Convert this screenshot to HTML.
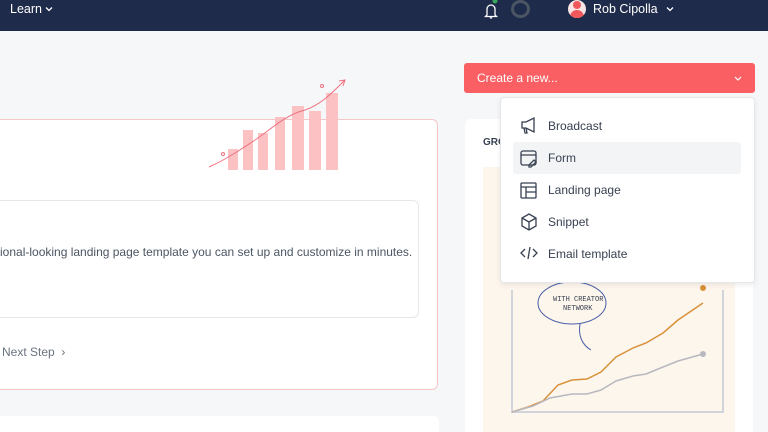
<!DOCTYPE html>
<html style="width:768px;height:432px;overflow:hidden"><head><style>
*{margin:0;padding:0;box-sizing:border-box}
body{width:768px;height:432px;overflow:hidden;background:#f6f7f9;font-family:"Liberation Sans",sans-serif;position:relative}
.a{position:absolute}
.hdr{left:0;top:0;width:768px;height:31px;background:#1f2b4b}
.t{font-size:12px;color:#374151;white-space:nowrap}
</style></head><body>
<div class="a hdr"></div>
<div class="a t" style="left:10px;top:2px;color:#fff;font-size:12.5px">Learn</div>
<svg class="a" style="left:44px;top:4px" width="10" height="10"><path d="M2 3.5L5 6.5 8 3.5" stroke="#fff" fill="none" stroke-width="1.3"/></svg>
<svg class="a" style="left:482px;top:0" width="18" height="20"><path d="M5 15V9a4 4 0 0 1 8 0v6l1.5 1.5h-11z M8 17.5a1.2 1.2 0 0 0 2 0" stroke="#fff" fill="none" stroke-width="1.3"/><circle cx="13" cy="1" r="2.5" fill="#3ba55c"/></svg>
<div class="a" style="left:511px;top:0px;width:19px;height:18px;border:3.5px solid #4b5563;border-radius:50%"></div>
<div class="a" style="left:568px;top:0;width:18px;height:18px;border-radius:50%;background:#f8e4e4;overflow:hidden"><div class="a" style="left:5px;top:1px;width:8px;height:8px;border-radius:50%;background:#f0585c"></div><div class="a" style="left:2px;top:10px;width:14px;height:10px;border-radius:7px 7px 0 0;background:#f0585c"></div></div>
<div class="a t" style="left:593px;top:2px;color:#fff;font-size:12.5px">Rob Cipolla</div>
<svg class="a" style="left:665px;top:4px" width="10" height="10"><path d="M2 3.5L5 6.5 8 3.5" stroke="#fff" fill="none" stroke-width="1.3"/></svg>

<div class="a" style="left:-10px;top:119px;width:448px;height:271px;background:#fff;border:1px solid #f7c6c6;border-radius:6px"></div>
<svg class="a" style="left:205px;top:75px" width="145" height="100">
<g fill="#fbc1c3"><rect x="23" y="74" width="10" height="21"/><rect x="38" y="55" width="10" height="40"/><rect x="53" y="58" width="10" height="37"/><rect x="70" y="42" width="10" height="53"/><rect x="87" y="31" width="12" height="64"/><rect x="104" y="36" width="12" height="59"/><rect x="121" y="18" width="12" height="77"/></g>
<path d="M4 92C20 85 35 75 50 65 65 55 80 40 100 35 115 30 125 20 140 5M134 6L140 5 138 11" stroke="#ef7280" fill="none" stroke-width="1"/>
<circle cx="117" cy="11" r="1.5" stroke="#ef7280" fill="none"/><circle cx="18" cy="79" r="1.5" stroke="#ef7280" fill="none"/>
</svg>
<div class="a" style="left:-10px;top:200px;width:429px;height:118px;background:#fff;border:1px solid #e5e7eb;border-radius:6px"></div>
<div class="a t" style="left:0;top:245px;color:#4b5563">ional-looking landing page template you can set up and customize in minutes.</div>
<div class="a t" style="left:2px;top:345px;color:#6b7280">Next Step &nbsp;›</div>
<div class="a" style="left:-10px;top:416px;width:449px;height:16px;background:#fff;border-radius:6px 6px 0 0"></div>

<div class="a" style="left:465px;top:119px;width:288px;height:313px;background:#fff;border-radius:6px 6px 0 0"></div>
<div class="a t" style="left:483px;top:137px;font-size:10px;font-weight:bold;color:#374151">GRO</div>
<div class="a" style="left:483px;top:167px;width:252px;height:265px;background:#fdf6ec"></div>
<svg class="a" style="left:483px;top:270px" width="252" height="162">
<path d="M29 20V142H240V20" stroke="#d1d5db" fill="none" stroke-width="2"/>
<ellipse cx="89" cy="33" rx="34" ry="21" stroke="#4a5fa8" fill="none"/>
<text x="70" y="31" font-size="7" fill="#374151" font-family="Liberation Mono">WITH CREATOR</text>
<text x="80" y="40" font-size="7" fill="#374151" font-family="Liberation Mono">NETWORK</text>
<path d="M97 54C95 65 99 75 108 80" stroke="#4a5fa8" fill="none"/>
<path d="M29 142L45 137 60 131 75 115 89 110 104 109 118 102 133 87 150 78 163 73 180 63 195 50 220 33" stroke="#d8913a" fill="none" stroke-width="1.5"/>
<path d="M29 142L50 136 67 128 89 124 104 124 118 120 133 111 150 106 163 104 180 97 195 91 220 84" stroke="#b8b8c0" fill="none" stroke-width="1.5"/>
<circle cx="220" cy="18" r="3" fill="#d8913a"/><circle cx="220" cy="84" r="3" fill="#b8b8c0"/>
</svg>

<div class="a" style="left:464px;top:63px;width:291px;height:30px;background:#f95f63;border-radius:3px"></div>
<div class="a t" style="left:477px;top:71px;color:#fff">Create a new...</div>
<svg class="a" style="left:733px;top:74px" width="10" height="10"><path d="M2 3L5 6 8 3" stroke="#fff" fill="none" stroke-width="1.2"/></svg>

<div class="a" style="left:500px;top:97px;width:255px;height:186px;background:#fff;border:1px solid #e5e7eb;border-radius:4px;box-shadow:0 2px 6px rgba(0,0,0,.08)"></div>
<div class="a" style="left:513px;top:142px;width:228px;height:32px;background:#f3f4f6;border-radius:3px"></div>
<svg class="a" style="left:519px;top:116px" width="20" height="160" fill="none" stroke="#374151" stroke-width="1.3">
<path d="M3 6h4l8-4v14l-8-4H3zM5 12l1 5h2l-1-5"/>
<rect x="2" y="35" width="15" height="14" rx="2"/><path d="M2 39h15M10 49l5-5 2 2-5 5h-2z"/>
<rect x="2" y="67" width="15" height="15" rx="1"/><path d="M2 71h15M7 71v11M7 76h10"/>
<path d="M10 98l7 4v8l-7 4-7-4v-8zM3 102l7 4 7-4M10 106v8"/>
<path d="M6 133l-4 4 4 4M14 133l4 4-4 4M11 131l-2 12"/>
</svg>
<div class="a t" style="left:548px;top:119px">Broadcast</div>
<div class="a t" style="left:548px;top:151px">Form</div>
<div class="a t" style="left:548px;top:183px">Landing page</div>
<div class="a t" style="left:548px;top:215px">Snippet</div>
<div class="a t" style="left:548px;top:247px">Email template</div>
</body></html>
